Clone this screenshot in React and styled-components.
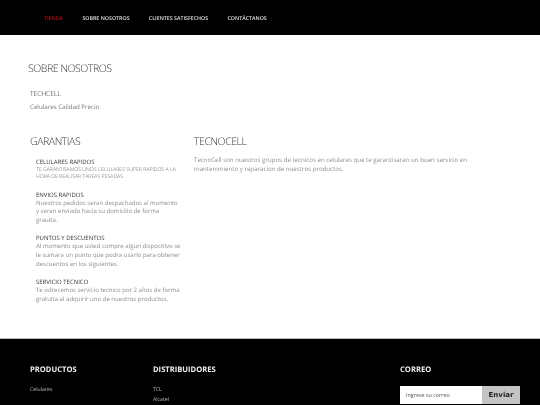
import React from "react";
import styled, { createGlobalStyle } from "styled-components";

const GlobalStyle = createGlobalStyle`
  html, body {
    margin: 0;
    padding: 0;
    height: 405px;
    overflow: hidden;
    background: #fff;
    font-family: "Open Sans", sans-serif;
  }
`;

const navLinks = ["TIENDA", "SOBRE NOSOTROS", "CLIENTES SATISFECHOS", "CONTÁCTANOS"];

const benefits = [
  {
    title: "CELULARES RAPIDOS",
    small: true,
    text: "TE GARANTISAMOS UNOS CELULARES SUPER RAPIDOS A LA HORA DE REALISAR TAREAS PESADAS.",
  },
  {
    title: "ENVIOS RAPIDOS",
    text: "Nuestros pedidos seran despachados al momento y seran enviado hacia su domicilio de forma grauita.",
  },
  {
    title: "PUNTOS Y DESCUENTOS",
    text: "Al momento que usted compre algun dispocitivo se le sumara un punto que podra usarlo para obtener descuentos en los siguientes.",
  },
  {
    title: "SERVICIO TECNICO",
    text: "Te odrecemos servicio tecnico por 2 años de forma gratuita al adquirir uno de nuestros productos.",
  },
];

const App = () => {
  return (
    <Page>
      <GlobalStyle />
      <Header>
        {navLinks.map((link, i) => (
          <NavLink key={link} $active={i === 0}>
            {link}
          </NavLink>
        ))}
      </Header>

      <Main>
        <PageTitle>SOBRE NOSOTROS</PageTitle>
        <Brand>TECHCELL</Brand>
        <Tagline>Celulares Calidad Precio</Tagline>

        <Columns>
          <LeftColumn>
            <SectionTitle>GARANTIAS</SectionTitle>
            <BenefitList>
              {benefits.map((b) => (
                <Benefit key={b.title}>
                  <BenefitTitle>{b.title}</BenefitTitle>
                  <BenefitText $small={b.small}>{b.text}</BenefitText>
                </Benefit>
              ))}
            </BenefitList>
          </LeftColumn>
          <RightColumn>
            <SectionTitle>TECNOCELL</SectionTitle>
            <Description>
              TecnoCell son nuestros grupos de tecnicos en celulares que te garantisaran un buen
              servicio en mantenimiento y reparacion de nuestros productos.
            </Description>
          </RightColumn>
        </Columns>
      </Main>

      <Footer>
        <ProductsCol>
          <FooterTitle>PRODUCTOS</FooterTitle>
          <FooterLink>Celulares</FooterLink>
        </ProductsCol>
        <DistributorsCol>
          <FooterTitle>DISTRIBUIDORES</FooterTitle>
          <FooterLink>TCL</FooterLink>
          <FooterLink>Alcatel</FooterLink>
        </DistributorsCol>
        <MailCol>
          <FooterTitle>CORREO</FooterTitle>
          <MailForm>
            <MailInput placeholder="Ingrese su correo" />
            <MailButton type="button">Enviar</MailButton>
          </MailForm>
        </MailCol>
      </Footer>
    </Page>
  );
};

const Page = styled.div`
  width: 540px;
  height: 405px;
  display: flex;
  flex-direction: column;
  overflow: hidden;
  text-rendering: geometricPrecision;
  will-change: transform;
`;

const Header = styled.header`
  height: 35px;
  flex: none;
  background: #000;
  display: flex;
  align-items: center;
  gap: 19.3px;
  padding: 0 0 0 44px;
  box-sizing: border-box;
`;

const NavLink = styled.a`
  font-size: 5.3px;
  font-weight: 600;
  color: ${(p) => (p.$active ? "#b01010" : "#e0e0e0")};
  white-space: nowrap;
`;

const Main = styled.main`
  flex: 1;
  padding: 26px 0 0 28px;
  min-height: 0;
`;

const PageTitle = styled.h1`
  margin: 0;
  font-size: 10.5px;
  font-weight: 300;
  letter-spacing: -0.45px;
  line-height: 16px;
  color: #333;
`;

const Brand = styled.h2`
  margin: 13px 0 0 2px;
  font-size: 7px;
  font-weight: 300;
  letter-spacing: -0.2px;
  line-height: 10px;
  color: #222;
`;

const Tagline = styled.p`
  margin: 2px 0 0 2px;
  font-size: 6.2px;
  line-height: 10px;
  color: #777;
`;

const Columns = styled.div`
  display: flex;
  margin-top: 22px;
  padding-left: 2px;
`;

const LeftColumn = styled.section`
  width: 164px;
  flex: none;
`;

const RightColumn = styled.section`
  width: 285px;
`;

const SectionTitle = styled.h3`
  margin: 0;
  font-size: 10.5px;
  font-weight: 300;
  letter-spacing: -0.45px;
  line-height: 16px;
  color: #333;
`;

const BenefitList = styled.div`
  display: flex;
  flex-direction: column;
  gap: 9.5px;
  margin-top: 7.5px;
  padding-left: 6px;
  width: 146px;
`;

const Benefit = styled.div``;

const BenefitTitle = styled.h4`
  margin: 0;
  font-size: 6px;
  font-weight: 400;
  line-height: 8px;
  color: #333;
`;

const BenefitText = styled.p`
  margin: 0;
  font-size: ${(p) => (p.$small ? "5.2px" : "6.05px")};
  font-weight: ${(p) => (p.$small ? 300 : 400)};
  line-height: ${(p) => (p.$small ? "7.8px" : "8.8px")};
  color: ${(p) => (p.$small ? "#666" : "#8e8e8e")};
`;

const Description = styled.p`
  margin: 6px 0 0;
  font-size: 6.15px;
  line-height: 8.7px;
  color: #8e8e8e;
`;

const Footer = styled.footer`
  height: 67px;
  flex: none;
  box-sizing: border-box;
  background: #000;
  border-top: 1px solid #bbb;
  display: flex;
  padding: 26px 0 0 30px;
`;

const ProductsCol = styled.div`
  width: 123px;
  flex: none;
`;

const DistributorsCol = styled.div`
  width: 247px;
  flex: none;
`;

const MailCol = styled.div`
  width: 120px;
`;

const FooterTitle = styled.h5`
  margin: 0 0 8px;
  font-size: 7.6px;
  font-weight: 700;
  line-height: 11px;
  color: #eee;
`;

const FooterLink = styled.a`
  display: block;
  font-size: 5.2px;
  line-height: 10px;
  color: #bbb;
`;

const MailForm = styled.form`
  display: flex;
  height: 18px;
  margin-top: 10px;
`;

const MailInput = styled.input`
  width: 82px;
  box-sizing: border-box;
  border: none;
  outline: none;
  padding: 0 0 0 6px;
  background: #fff;
  font-family: "Open Sans", sans-serif;
  font-size: 5.4px;
  &::placeholder {
    color: #555;
    opacity: 1;
  }
`;

const MailButton = styled.button`
  width: 38px;
  border: none;
  padding: 0;
  background: #c4c4c4;
  color: #222;
  font-family: "DejaVu Sans", sans-serif;
  font-size: 7px;
  font-weight: 700;
`;

export default App;
